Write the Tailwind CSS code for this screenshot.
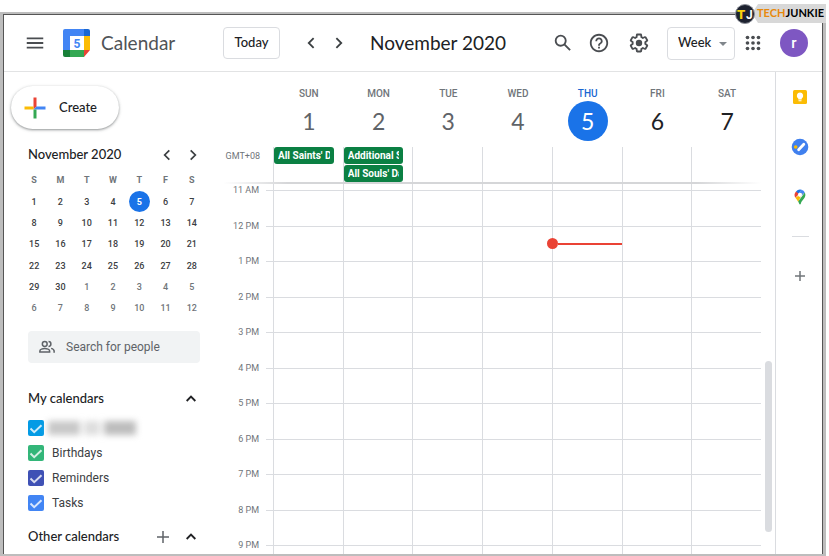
<!DOCTYPE html>
<html lang="en">
<head>
    <meta charset="UTF-8">
    <meta name="viewport" content="width=device-width, initial-scale=1.0">
    <title>Calendar - November 2020</title>
    <script src="https://cdn.jsdelivr.net/npm/@tailwindcss/browser@4"></script>
</head>
<body class="bg-white font-[Roboto,sans-serif] text-[#3c4043]">
    <div class="relative flex h-screen flex-col overflow-hidden pt-3 pr-[3px]">
        <!-- Site badge -->
        <div class="absolute top-1 right-[3px] z-10 flex h-[19px] items-center">
            <svg class="z-10 -mr-[3px] size-5" viewBox="0 0 20 20" aria-hidden="true">
                <circle cx="10" cy="10" r="9.5" fill="#1d2230" stroke="#8c8f98"/>
                <text x="2" y="15" font-family="Roboto" font-weight="900" font-size="13" fill="#f9d20c">T</text>
                <text x="11" y="15" font-family="Roboto" font-weight="700" font-size="12" fill="#fff">J</text>
            </svg>
            <div class="flex h-[19px] items-center bg-[#d8d8d8] pr-[2px] pl-[5px] font-[Lato,sans-serif] text-[11px] font-bold text-black [clip-path:polygon(6px_0,100%_0,100%_100%,6px_100%,0_50%)]"><span class="text-[#e8890c]">TECH</span>JUNKIE</div>
        </div>

        <div class="flex min-h-0 flex-1 flex-col border-t-2 border-r-3 border-b-2 border-l-3 border-[#bdbdbd]">
            <div class="flex min-h-0 flex-1 flex-col border-t border-r border-l border-[#555]">
                <!-- Top bar -->
                <header class="flex h-[57px] shrink-0 items-center border-b border-[#e2e3e4] font-[Lato,sans-serif]">
                    <div class="flex w-[219px] shrink-0 items-center pl-[13px]">
                        <button class="flex size-9 items-center justify-center" aria-label="Main menu">
                            <svg class="size-[22px]" viewBox="0 0 24 24" fill="#4a4d51"><path d="M3 18h18v-2H3v2zm0-5h18v-2H3v2zm0-7v2h18V6H3z"/></svg>
                        </button>
                        <a href="#" class="ml-[10px] flex items-center gap-[10px] text-[19px] text-[#4f5357]">
                            <svg class="size-7" viewBox="0 0 28 28" aria-hidden="true">
                                <path d="M2 0h19v7H7v14H0V2a2 2 0 0 1 2-2z" fill="#4285f4"/>
                                <path d="M21 0h4a2 2 0 0 1 2 2v5h-6z" fill="#1967d2"/>
                                <path d="M21 7h6v14h-6z" fill="#fbbc04"/>
                                <path d="M7 21h14v7H7z" fill="#34a853"/>
                                <path d="M0 21h7v7H2a2 2 0 0 1-2-2z" fill="#188038"/>
                                <path d="M21 21h6l-6 7z" fill="#ea4335"/>
                                <path d="M7 7h14v14H7z" fill="#fff"/>
                                <text x="14" y="18.5" text-anchor="middle" font-family="Roboto" font-weight="700" font-size="12" fill="#4285f4">5</text>
                            </svg>
                            Calendar
                        </a>
                    </div>
                    <button class="h-8 w-[57px] shrink-0 rounded border border-[#dadce0] text-[13px] font-medium text-[#202124]">Today</button>
                    <button class="ml-[17px] flex size-7 items-center justify-center" aria-label="Previous week">
                        <svg class="size-[18px]" viewBox="0 0 24 24" fill="none" stroke="#3c4043" stroke-width="2.4"><path d="M15.5 5.5 9 12l6.500 6.500"/></svg>
                    </button>
                    <button class="flex size-7 items-center justify-center" aria-label="Next week">
                        <svg class="size-[18px]" viewBox="0 0 24 24" fill="none" stroke="#3c4043" stroke-width="2.4"><path d="M8.500 5.500 15 12l-6.500 6.500"/></svg>
                    </button>
                    <h1 class="ml-[17px] text-[19px] whitespace-nowrap text-[#202124]">November 2020</h1>
                    <div class="ml-auto flex shrink-0 items-center pr-[14px]">
                        <button class="flex size-9 items-center justify-center" aria-label="Search">
                            <svg class="size-[22px]" viewBox="0 0 24 24" fill="#4a4d51"><path d="M20.490 19l-5.730-5.730C15.530 12.200 16 10.910 16 9.500A6.500 6.500 0 1 0 9.500 16c1.410 0 2.700-.47 3.770-1.240L19 20.490 20.490 19zM5 9.500C5 7.010 7.010 5 9.500 5S14 7.010 14 9.500 11.990 14 9.500 14 5 11.990 5 9.500z"/></svg>
                        </button>
                        <button class="flex size-9 items-center justify-center" aria-label="Help">
                            <svg class="size-[22px]" viewBox="0 0 24 24" fill="#4a4d51"><path d="M11 18h2v-2h-2v2zm1-16C6.480 2 2 6.480 2 12s4.480 10 10 10 10-4.480 10-10S17.520 2 12 2zm0 18c-4.410 0-8-3.590-8-8s3.590-8 8-8 8 3.590 8 8-3.590 8-8 8zm0-14c-2.210 0-4 1.790-4 4h2c0-1.100.9-2 2-2s2 .9 2 2c0 2-3 1.750-3 5h2c0-2.250 3-2.500 3-5 0-2.210-1.790-4-4-4z"/></svg>
                        </button>
                        <button class="ml-1 flex size-9 items-center justify-center" aria-label="Settings">
                            <svg class="size-[22px]" viewBox="0 0 24 24" fill="#4a4d51"><path d="M13.850 22.250h-3.700c-.74 0-1.360-.54-1.450-1.270l-.27-1.890c-.27-.14-.53-.29-.79-.46l-1.800.72c-.7.26-1.470-.03-1.810-.65L2.200 15.530c-.35-.66-.2-1.440.36-1.880l1.530-1.190c-.01-.15-.02-.3-.02-.46 0-.15.01-.31.02-.46l-1.520-1.190c-.59-.45-.74-1.260-.37-1.880l1.850-3.190c.34-.62 1.110-.9 1.790-.63l1.810.73c.26-.17.52-.32.78-.46l.27-1.910c.09-.7.71-1.250 1.440-1.250h3.700c.74 0 1.360.54 1.450 1.270l.27 1.890c.27.14.53.29.79.46l1.800-.72c.71-.26 1.480.03 1.820.65l1.840 3.180c.36.66.2 1.440-.36 1.880l-1.520 1.190c.01.15.02.3.02.46s-.01.31-.02.46l1.520 1.190c.56.45.72 1.230.37 1.860l-1.860 3.220c-.34.62-1.110.9-1.800.63l-1.800-.72c-.26.17-.52.32-.78.46l-.27 1.910c-.1.680-.720 1.220-1.460 1.220zm-3.230-2h2.760l.37-2.550.53-.22c.44-.18.88-.44 1.340-.78l.45-.34 2.380.96 1.380-2.400-2.030-1.580.07-.56c.03-.26.06-.51.06-.78s-.03-.53-.06-.78l-.07-.56 2.030-1.580-1.390-2.400-2.390.96-.45-.35c-.42-.32-.87-.58-1.330-.77l-.52-.22-.37-2.550h-2.760l-.37 2.550-.53.21c-.44.19-.88.44-1.340.79l-.45.33-2.380-.95-1.390 2.390 2.030 1.580-.07.56a7 7 0 0 0-.06.79c0 .26.02.53.06.78l.07.56-2.030 1.580 1.380 2.400 2.390-.96.45.35c.43.33.86.58 1.330.77l.53.22.38 2.550z"/><circle cx="12" cy="12" r="3.500"/></svg>
                        </button>
                        <div class="relative ml-[10px] w-[68px]">
                            <select class="h-[33px] w-full appearance-none rounded border border-[#dadce0] bg-white pl-[10px] text-[13px] font-medium text-[#202124]" aria-label="View">
                                <option>Day</option>
                                <option selected>Week</option>
                                <option>Month</option>
                            </select>
                            <svg class="pointer-events-none absolute top-[15px] right-2 h-1 w-2" viewBox="0 0 8 4" fill="#80868b"><path d="M0 0h8L4 4z"/></svg>
                        </div>
                        <button class="flex size-9 items-center justify-center" aria-label="Google apps">
                            <svg class="size-[22px]" viewBox="0 0 24 24" fill="#4a4d51">
                                <circle cx="6" cy="6" r="2"/><circle cx="12" cy="6" r="2"/><circle cx="18" cy="6" r="2"/>
                                <circle cx="6" cy="12" r="2"/><circle cx="12" cy="12" r="2"/><circle cx="18" cy="12" r="2"/>
                                <circle cx="6" cy="18" r="2"/><circle cx="12" cy="18" r="2"/><circle cx="18" cy="18" r="2"/>
                            </svg>
                        </button>
                        <button class="ml-[9px] size-7 rounded-full bg-[#7e57c2] font-[Roboto,sans-serif] text-[15px] font-medium text-white" aria-label="Account">r</button>
                    </div>
                </header>

                <div class="flex min-h-0 flex-1">
                    <!-- Left sidebar -->
                    <aside class="w-[211px] shrink-0 overflow-hidden pt-[14px]">
                        <button class="ml-[7px] flex h-[43px] w-[108px] items-center gap-3 rounded-full pl-3 font-[Lato,sans-serif] text-[13px] font-medium text-[#202124] shadow-[0_1px_2px_rgba(60,64,67,.4),0_1px_3px_1px_rgba(60,64,67,.15)]">
                            <svg class="size-6" viewBox="0 0 24 24" aria-hidden="true">
                                <path d="M10.500 1.500h3v9L12 12l-1.500 1.500z" fill="#ea4335"/>
                                <path d="M13.500 10.500h9v3h-12z" fill="#4285f4"/>
                                <path d="M10.500 13.500h3v9h-3z" fill="#34a853"/>
                                <path d="M1.500 10.500h9v3h-9z" fill="#fbbc05"/>
                            </svg>
                            Create
                        </button>

                        <div class="mt-4 flex h-5 items-center pr-[9px] pl-6 font-[Lato,sans-serif]">
                            <h2 class="flex-1 text-[13px] font-medium text-[#202124]">November 2020</h2>
                            <button class="flex h-5 w-[26px] items-center justify-center" aria-label="Previous month">
                                <svg class="size-4" viewBox="0 0 24 24" fill="none" stroke="#3c4043" stroke-width="2.6"><path d="M15.500 5 8.500 12l7 7"/></svg>
                            </button>
                            <button class="flex h-5 w-[26px] items-center justify-center" aria-label="Next month">
                                <svg class="size-4" viewBox="0 0 24 24" fill="none" stroke="#3c4043" stroke-width="2.600"><path d="m8.500 5 7 7-7 7"/></svg>
                            </button>
                        </div>

                        <table class="mt-1 ml-[17px] h-[150px] w-[184px] table-fixed text-center text-[9px] leading-3 font-medium">
                            <thead class="text-[#70757a]">
                                <tr class="h-[22px]"><th>S</th><th>M</th><th>T</th><th>W</th><th>T</th><th>F</th><th>S</th></tr>
                            </thead>
                            <tbody id="mini-month"></tbody>
                        </table>

                        <div class="mt-3 mr-[15px] ml-6 flex h-8 items-center rounded bg-[#f1f3f4] pl-[10px]">
                            <svg class="size-[18px] shrink-0" viewBox="0 0 24 24" fill="none" stroke="#5f6368" stroke-width="2" aria-hidden="true">
                                <circle cx="9" cy="8" r="3.200"/>
                                <path d="M2.500 18.500v-1.300c0-2 3.800-3.200 6.500-3.200s6.500 1.200 6.500 3.200v1.300z"/>
                                <path d="M14 4.800a3.200 3.200 0 0 1 0 6.400M17.500 13.800c2.200.7 4 1.800 4 3.400v2.300"/>
                            </svg>
                            <input type="text" placeholder="Search for people" aria-label="Search for people" class="ml-[10px] w-full min-w-0 text-[12px] outline-none placeholder:text-[#5f6368]">
                        </div>

                        <div class="mt-[26px] flex h-5 items-center pr-[14px] pl-6 font-[Lato,sans-serif]">
                            <h2 class="flex-1 text-[13px] font-medium text-[#202124]">My calendars</h2>
                            <button class="flex size-5 items-center justify-center" aria-label="Collapse my calendars">
                                <svg class="size-4" viewBox="0 0 24 24" fill="none" stroke="#202124" stroke-width="2.800"><path d="m5.500 15 6.500-6.500 6.500 6.500"/></svg>
                            </button>
                        </div>
                        <ul id="calendar-list" class="mt-[6px] pl-6 text-[12px]"></ul>

                        <div class="mt-3 flex h-5 items-center pr-[14px] pl-6 font-[Lato,sans-serif]">
                            <h2 class="flex-1 text-[13px] font-medium text-[#202124]">Other calendars</h2>
                            <button class="mr-2 flex size-5 items-center justify-center" aria-label="Add other calendars">
                                <svg class="size-4" viewBox="0 0 16 16" fill="none" stroke="#5f6368" stroke-width="1.500"><path d="M8 2v12M2 8h12"/></svg>
                            </button>
                            <button class="flex size-5 items-center justify-center" aria-label="Collapse other calendars">
                                <svg class="size-4" viewBox="0 0 24 24" fill="none" stroke="#202124" stroke-width="2.800"><path d="m5.500 15 6.500-6.500 6.500 6.500"/></svg>
                            </button>
                        </div>
                    </aside>

                    <!-- Week view -->
                    <main class="flex min-w-0 flex-1 flex-col">
                        <div class="flex h-[75px] shrink-0 pr-[13px] pl-[59px]">
                            <div id="week-days" class="grid flex-1 grid-cols-7 pt-4 text-center"></div>
                        </div>
                        <div class="flex h-[35px] shrink-0 pr-[14px]">
                            <div class="w-[58px] shrink-0 pr-[13px] text-right text-[9px] leading-[18px] text-[#70757a]">GMT+08</div>
                            <div id="all-day" class="grid min-w-0 flex-1 grid-cols-7"></div>
                        </div>
                        <div class="mr-[14px] ml-2 h-[2px] shrink-0 bg-[linear-gradient(to_right,transparent,#d5d6d8_12%,#d5d6d8_88%,transparent)]"></div>
                        <div class="flex min-h-0 flex-1 overflow-hidden">
                            <div class="relative min-w-0 flex-1">
                                <div class="ml-[58px] grid h-[6px] grid-cols-7">
                                    <div class="border-l border-[#dadce0]"></div>
                                    <div class="border-l border-[#dadce0]"></div>
                                    <div class="border-l border-[#dadce0]"></div>
                                    <div class="border-l border-[#dadce0]"></div>
                                    <div class="border-l border-[#dadce0]"></div>
                                    <div class="border-l border-[#dadce0]"></div>
                                    <div class="border-l border-[#dadce0]"></div>
                                </div>
                                <div id="hours"></div>
                                <!-- Current time -->
                                <div class="pointer-events-none absolute top-[54px] right-0 left-[58px] grid grid-cols-7">
                                    <div class="relative col-start-5 flex h-[11px] items-center">
                                        <span class="-ml-[5px] size-[11px] shrink-0 rounded-full bg-[#ea4335]"></span>
                                        <span class="h-[2px] flex-1 bg-[#ea4335]"></span>
                                    </div>
                                </div>
                            </div>
                            <div class="w-[14px] shrink-0 pl-1">
                                <div class="mt-[177px] h-[171px] w-[7px] rounded-full bg-[#dadce0]"></div>
                            </div>
                        </div>
                    </main>

                    <!-- Side panel -->
                    <aside class="flex w-[47px] shrink-0 flex-col items-center border-l border-[#dadce0] pt-[15px] pl-[2px]">
                        <button class="flex size-5 items-center justify-center" aria-label="Keep">
                            <svg class="size-[18px]" viewBox="0 0 18 18"><rect x="2" y="2" width="14" height="14" rx="1.500" fill="#fbbc04"/><path d="M9 4.500a3.200 3.200 0 0 0-1.700 5.900v1.200h3.400v-1.200A3.200 3.200 0 0 0 9 4.500zM7.500 12.300h3v1h-3z" fill="#fff"/></svg>
                        </button>
                        <button class="mt-[30px] flex size-5 items-center justify-center" aria-label="Tasks">
                            <svg class="size-[18px]" viewBox="0 0 18 18"><circle cx="9" cy="9" r="8.300" fill="#4080ee"/><path d="m7.600 11.800 5.200-5.500" stroke="#fff" stroke-width="2.800" stroke-linecap="round"/><circle cx="4.700" cy="9" r="1.800" fill="#fbbc04"/></svg>
                        </button>
                        <button class="mt-[30px] flex size-5 items-center justify-center" aria-label="Maps">
                            <svg class="size-[18px]" viewBox="0 0 18 18">
                                <path d="M5 3.500A5.400 5.400 0 0 1 10.600 1.700L6.700 6.500z" fill="#1a73e8"/>
                                <path d="M10.600 1.700a5.400 5.400 0 0 1 3.200 2.700L9 9.500 6.700 6.500z" fill="#4285f4"/>
                                <path d="M5 3.500 8 6 4.400 9.800A5.300 5.300 0 0 1 5 3.500z" fill="#ea4335"/>
                                <path d="M4.400 9.800 11.500 5l-4.300 9A22 22 0 0 0 4.400 9.800z" fill="#fbbc04"/>
                                <path d="M13.800 4.400c1 2 .7 4-.6 5.900-1.700 2.200-2.800 3-3.400 5.400-.3 1-1.300 1-1.600 0l-1-2.300z" fill="#34a853"/>
                                <circle cx="9" cy="6.800" r="2.100" fill="#fff"/>
                            </svg>
                        </button>
                        <div class="mt-[29px] w-[17px] border-t border-[#dadce0]"></div>
                        <button class="mt-[29px] flex size-5 items-center justify-center" aria-label="Get add-ons">
                            <svg class="size-3" viewBox="0 0 12 12" fill="none" stroke="#70757a" stroke-width="1.500"><path d="M6 1v10M1 6h10"/></svg>
                        </button>
                    </aside>
                </div>
            </div>
        </div>
    </div>

    <script>
        const TODAY = 5;
        const DAYS_IN_MONTH = 30;

        const days = ['SUN', 'MON', 'TUE', 'WED', 'THU', 'FRI', 'SAT'];
        const hours = ['11 AM', '12 PM', '1 PM', '2 PM', '3 PM', '4 PM', '5 PM', '6 PM', '7 PM', '8 PM', '9 PM'];
        const allDay = [["All Saints' Day"], ['Additional Special Non-Working Day', "All Souls' Day"], [], [], [], [], []];
        const calendars = [
            { name: '', color: 'bg-[#039be5]' },
            { name: 'Birthdays', color: 'bg-[#33b679]' },
            { name: 'Reminders', color: 'bg-[#3f51b5]' },
            { name: 'Tasks', color: 'bg-[#4285f4]' }
        ];

        // Mini month, six weeks
        let month = '';
        for (let week = 0; week < 6; week++) {
            month += '<tr>';
            for (let d = 1; d <= 7; d++) {
                const n = week * 7 + d;
                if (n === TODAY) {
                    month += `<td><span class="mx-auto -my-[5px] flex size-[21px] items-center justify-center rounded-full bg-[#1a73e8] font-bold text-white">${n}</span></td>`;
                } else if (n <= DAYS_IN_MONTH) {
                    month += `<td>${n}</td>`;
                } else {
                    month += `<td class="text-[#70757a]">${n - DAYS_IN_MONTH}</td>`;
                }
            }
            month += '</tr>';
        }
        document.getElementById('mini-month').innerHTML = month;

        // Calendar list
        document.getElementById('calendar-list').innerHTML = calendars.map(c => `
            <li>
                <label class="flex h-[25px] items-center gap-2">
                    <span class="grid size-4 shrink-0">
                        <input type="checkbox" checked aria-label="${c.name || 'Personal'}" class="col-start-1 row-start-1 size-4 appearance-none rounded-[2px] ${c.color}">
                        <svg class="pointer-events-none col-start-1 row-start-1 size-4" viewBox="0 0 16 16" fill="none" stroke="#fff" stroke-opacity=".8" stroke-width="2"><path d="m2.500 8.500 3.700 3.700 7.300-7"/></svg>
                    </span>
                    ${c.name || '<span class="-ml-1 flex h-[14px] w-[88px] gap-1 blur-[3px]"><span class="w-8 bg-[#c8c8c8]"></span><span class="w-4 bg-[#dedede]"></span><span class="flex-1 bg-[#bdbdbd]"></span></span>'}
                </label>
            </li>`).join('');

        // Week header
        document.getElementById('week-days').innerHTML = days.map((day, i) => {
            const n = i + 1;
            const name = n === TODAY ? 'text-[#1967d2]' : 'text-[#70757a]';
            const num = n === TODAY ? 'bg-[#1a73e8] text-white' : n < TODAY ? 'text-[#5f6368]' : 'text-[#202124]';
            return `<div>
                <div class="h-[13px] text-[10px] leading-3 font-medium ${name}">${day}</div>
                <div class="mx-auto flex size-10 items-center justify-center rounded-full font-[Lato,sans-serif] text-[23px] ${num}">${n}</div>
            </div>`;
        }).join('');

        // All-day events
        document.getElementById('all-day').innerHTML = allDay.map(events => `
            <div class="flex min-w-0 flex-col gap-px border-l border-[#dadce0] pr-[9px]">
                ${events.map(e => `<button class="h-[17px] shrink-0 overflow-hidden rounded-[3px] bg-[#0b8043] px-1 text-left text-[10px] font-bold text-white"><span class="block overflow-hidden whitespace-nowrap">${e}</span></button>`).join('')}
            </div>`).join('');

        // Hour rows
        document.getElementById('hours').innerHTML = hours.map((hour, i) => `
            <div class="flex ${i % 2 ? 'h-[35px]' : 'h-9'}">
                <div class="-mt-2 w-[44px] shrink-0 text-right text-[9px] leading-4 text-[#70757a]">${hour}</div>
                <div class="ml-[7px] w-[7px] shrink-0 border-t border-[#dadce0]"></div>
                <div class="grid flex-1 grid-cols-7 border-t border-[#dadce0]">${'<div class="border-l border-[#dadce0]"></div>'.repeat(7)}</div>
            </div>`).join('');
    </script>
</body>
</html>
